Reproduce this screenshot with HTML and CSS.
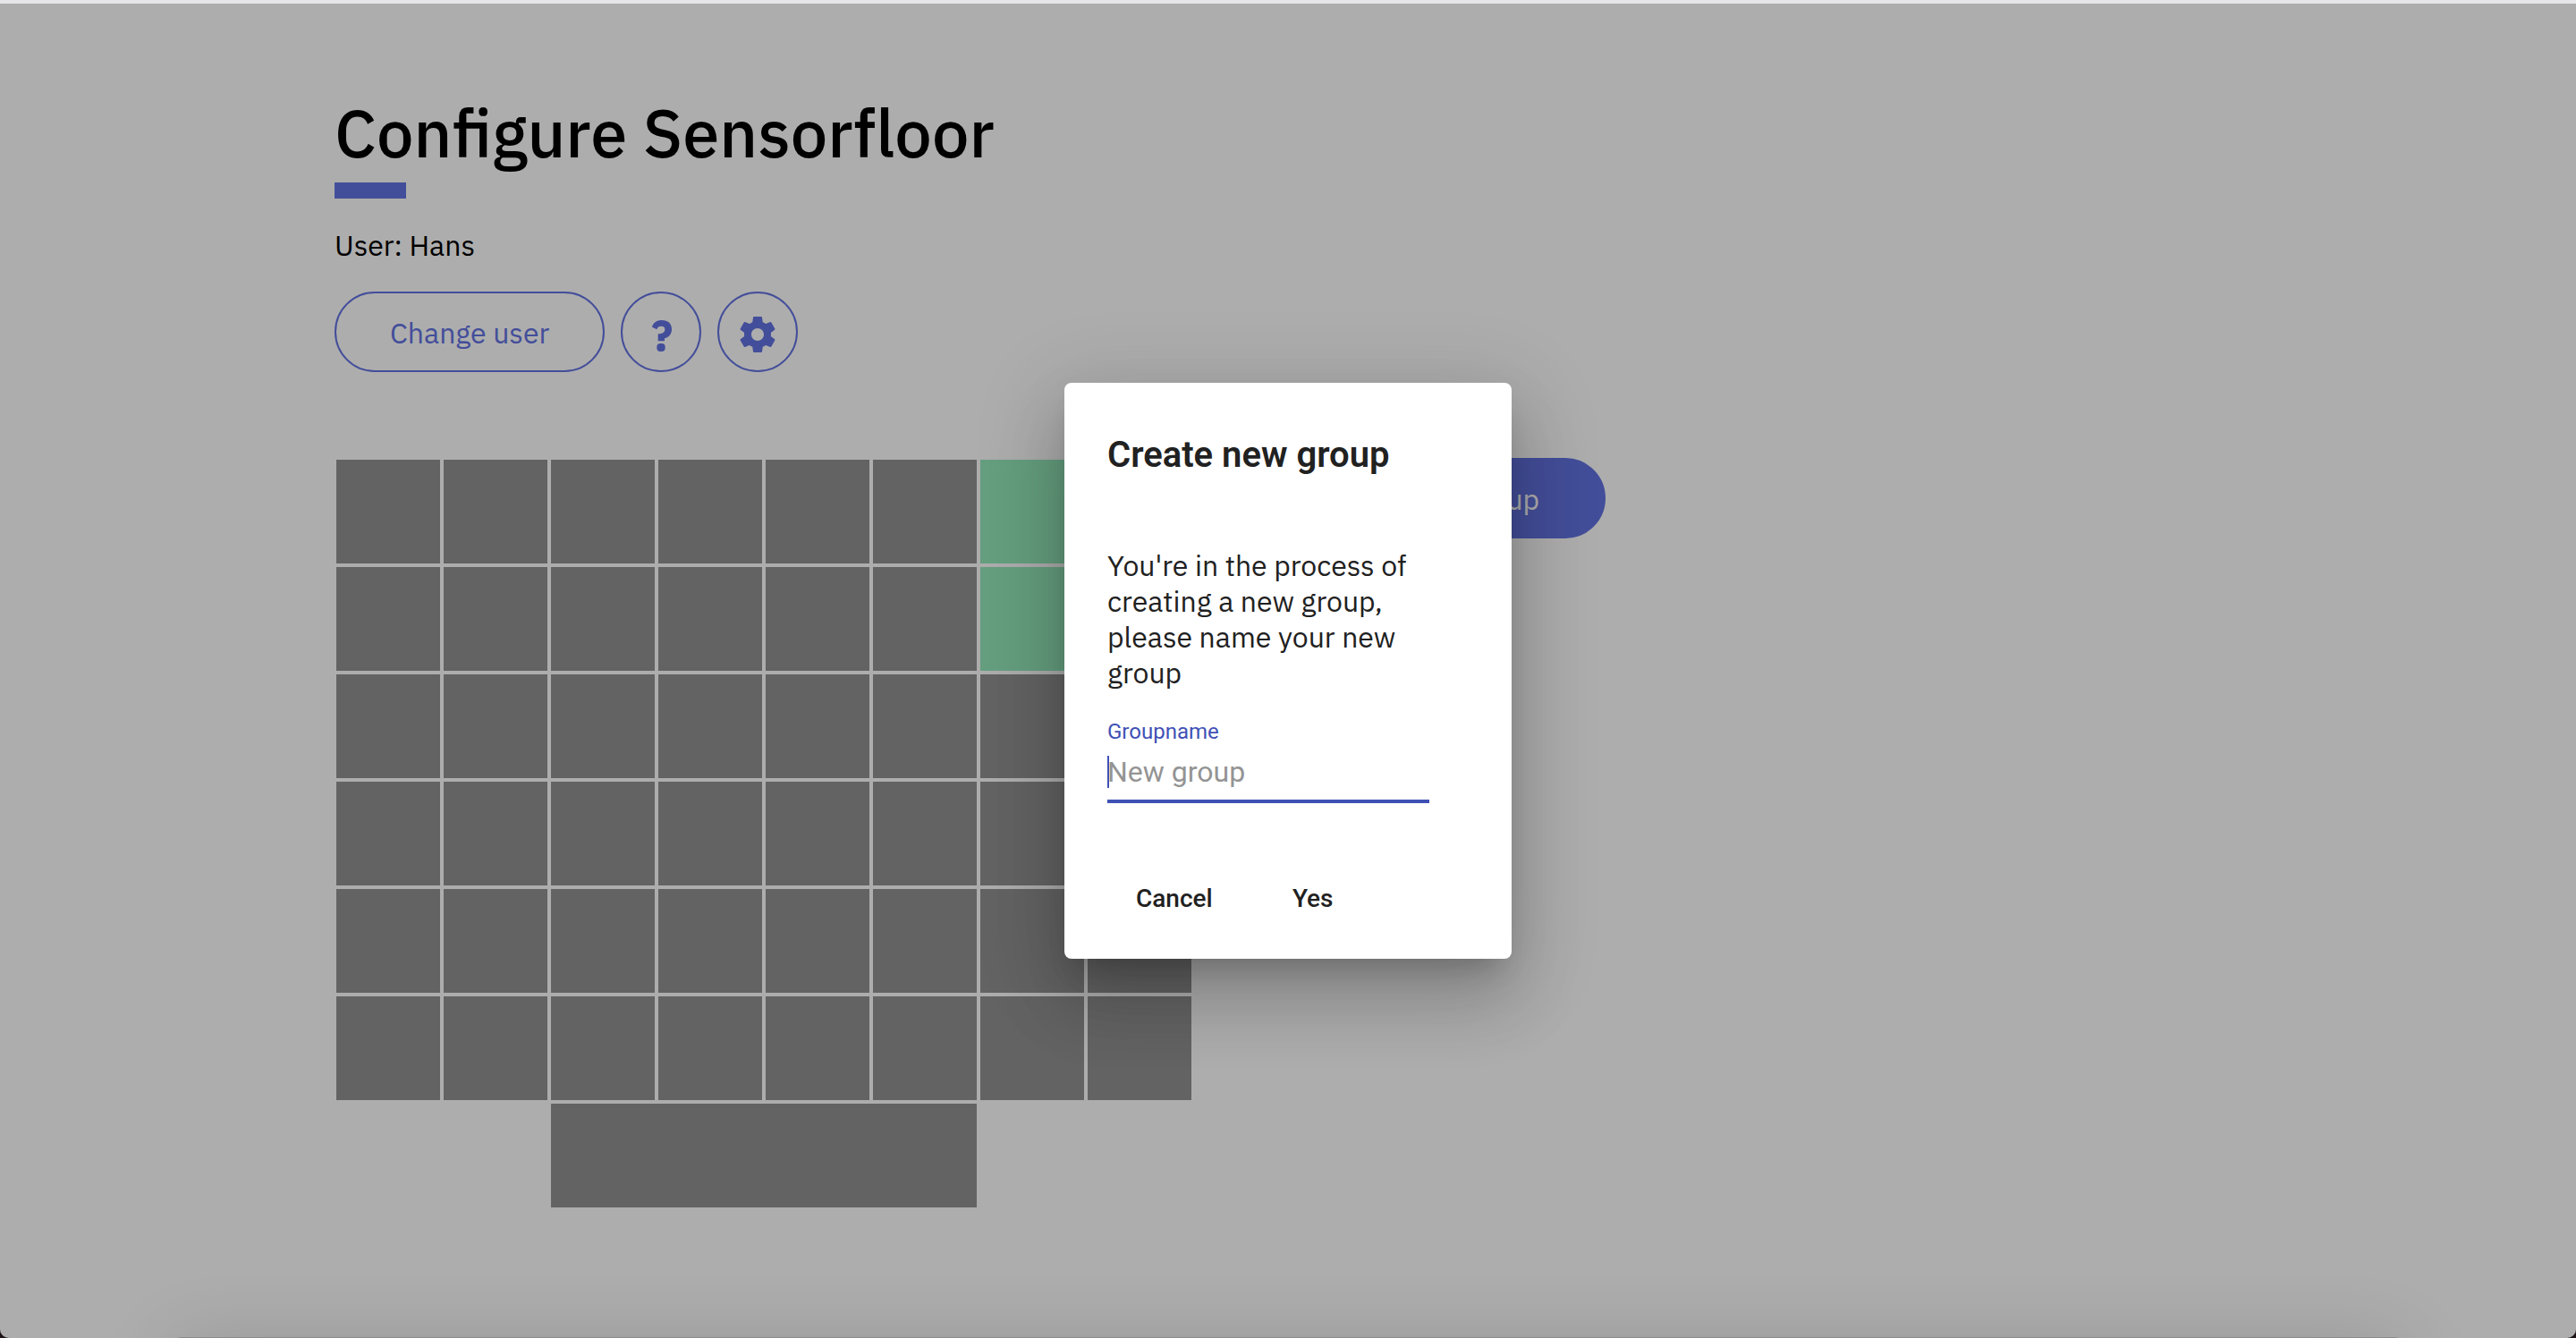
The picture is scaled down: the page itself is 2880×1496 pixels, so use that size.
FILE: index.html
```
<!DOCTYPE html>
<html lang="en">
<head>
  <meta charset="utf-8">
  <meta name="viewport" content="width=device-width, initial-scale=1">
  <title>Configure Sensorfloor</title>
  <link rel="stylesheet" href="styles.css">
</head>
<body>
  <div class="window">
    <main class="page">
      <h1 class="page-title">Configure Sensorfloor</h1>
      <div class="title-bar"></div>
      <p class="user">User: Hans</p>
      <div class="toolbar">
        <button class="btn" type="button">Change user</button>
        <button class="btn btn-icon" type="button" aria-label="Help">
          <svg class="icon" viewBox="103 119 144 144" aria-hidden="true"><path d="M145 166C149 151 161 143 178 143C198 143 211 154 211 173C211 190 202 200 187 204V213H165V189C180 189 188 184 188 174C188 167 184 163 176 163C168 163 163 166 161 174Z"/><rect x="161" y="221" width="28" height="27" rx="12"/></svg>
        </button>
        <button class="btn btn-icon" type="button" aria-label="Settings">
          <svg class="icon" viewBox="0 0 24 24" aria-hidden="true"><path d="M19.43 12.98c.04-.32.07-.64.07-.98s-.03-.66-.07-.98l2.11-1.65c.19-.15.24-.42.12-.64l-2-3.46c-.12-.22-.39-.3-.61-.22l-2.49 1c-.52-.4-1.08-.73-1.69-.98l-.38-2.65C14.46 2.18 14.25 2 14 2h-4c-.25 0-.46.18-.49.42l-.38 2.65c-.61.25-1.17.59-1.69.98l-2.49-1c-.23-.09-.49 0-.61.22l-2 3.46c-.13.22-.07.49.12.64l2.11 1.65c-.04.32-.07.65-.07.98s.03.66.07.98l-2.11 1.65c-.19.15-.24.42-.12.64l2 3.46c.12.22.39.3.61.22l2.49-1c.52.4 1.08.73 1.69.98l.38 2.65c.03.24.24.42.49.42h4c.25 0 .46-.18.49-.42l.38-2.65c.61-.25 1.17-.59 1.69-.98l2.49 1c.23.09.49 0 .61-.22l2-3.46c.12-.22.07-.49-.12-.64l-2.11-1.65zM12 15.5c-1.93 0-3.5-1.57-3.5-3.5s1.57-3.5 3.5-3.5 3.5 1.57 3.5 3.5-1.57 3.5-3.5 3.5z"/></svg>
        </button>
      </div>
      <div class="workspace">
        <div class="floor">
          <i class="tile"></i><i class="tile"></i><i class="tile"></i><i class="tile"></i><i class="tile"></i><i class="tile"></i><i class="tile selected"></i><i class="tile selected"></i>
          <i class="tile"></i><i class="tile"></i><i class="tile"></i><i class="tile"></i><i class="tile"></i><i class="tile"></i><i class="tile selected"></i><i class="tile selected"></i>
          <i class="tile"></i><i class="tile"></i><i class="tile"></i><i class="tile"></i><i class="tile"></i><i class="tile"></i><i class="tile"></i><i class="tile"></i>
          <i class="tile"></i><i class="tile"></i><i class="tile"></i><i class="tile"></i><i class="tile"></i><i class="tile"></i><i class="tile"></i><i class="tile"></i>
          <i class="tile"></i><i class="tile"></i><i class="tile"></i><i class="tile"></i><i class="tile"></i><i class="tile"></i><i class="tile"></i><i class="tile"></i>
          <i class="tile"></i><i class="tile"></i><i class="tile"></i><i class="tile"></i><i class="tile"></i><i class="tile"></i><i class="tile"></i><i class="tile"></i>
          <i class="tile entrance"></i>
        </div>
        <button class="btn btn-primary" type="button">Create new group</button>
      </div>
    </main>

    <div class="backdrop">
      <form class="dialog" role="dialog" aria-labelledby="dialog-title">
        <h2 class="dialog-title" id="dialog-title">Create new group</h2>
        <p class="dialog-text">You're in the process of creating a new group, please name your new group</p>
        <div class="field">
          <label class="field-label" for="groupname">Groupname</label>
          <input class="field-input" id="groupname" type="text" placeholder="New group">
        </div>
        <div class="dialog-actions">
          <button class="dialog-btn" type="button">Cancel</button>
          <button class="dialog-btn" type="button">Yes</button>
        </div>
      </form>
    </div>
    <div class="bottom-sheet"></div>
  </div>
</body>
</html>
```
FILE: styles.css
```
:root {
  --accent: #6473e4;
  --field: #3f51b5;
  --ink: #212121;
}

* {
  box-sizing: border-box;
}

html {
  background: #1d1416;
}

body {
  margin: 0;
  font: 400 32px/40px "IBM Plex Sans", Roboto, sans-serif;
  color: #000;
}

h1, h2, p {
  margin: 0;
}

button, input {
  font: inherit;
}

.window {
  position: relative;
  min-height: 100vh;
  overflow: hidden;
  background: #fff;
  border-top: 4px solid #e6e6ea;
  border-radius: 0 0 10px 10px;
}

.page {
  max-width: 2132px;
  margin: 0 auto;
  padding: 100px 0 96px;
}

.page-title {
  font-size: 74px;
  font-weight: 500;
  line-height: 88px;
}

.title-bar {
  width: 80px;
  height: 18px;
  margin-top: 12px;
  background: var(--accent);
}

.user {
  margin: 32px 0;
}

.toolbar {
  display: flex;
  gap: 18px;
}

.btn {
  display: flex;
  align-items: center;
  justify-content: center;
  height: 90px;
  padding: 2px 60px 0;
  border: 2px solid var(--accent);
  border-radius: 45px;
  background: transparent;
  color: var(--accent);
}

.btn-icon {
  width: 90px;
  padding: 6px 0 0;
}

.btn-primary {
  padding: 2px 72px 0;
  background: var(--accent);
  color: #fff;
}

.icon {
  width: 48px;
  height: 48px;
  fill: currentColor;
}

.workspace {
  display: flex;
  align-items: flex-start;
  gap: 60px;
  margin-top: 96px;
}

.floor {
  display: grid;
  grid-template-columns: repeat(8, 116px);
  grid-auto-rows: 116px;
  gap: 4px;
  padding: 2px;
}

.tile {
  background: #939393;
}

.tile.selected {
  background: #96ebbb;
}

.tile.entrance {
  grid-column: 3 / span 4;
}

.backdrop {
  position: absolute;
  inset: 0;
  display: flex;
  align-items: center;
  justify-content: center;
  background: rgba(0, 0, 0, 0.32);
}

.dialog {
  width: 500px;
  padding: 48px 48px 31px;
  border-radius: 8px;
  background: #fff;
  color: var(--ink);
  box-shadow:
    0 22px 30px -14px rgba(0, 0, 0, 0.2),
    0 48px 76px 6px rgba(0, 0, 0, 0.14),
    0 18px 92px 16px rgba(0, 0, 0, 0.12);
}

.dialog-title {
  font: 600 40px/66px Roboto, sans-serif;
}

.dialog-text {
  margin-top: 70px;
}

.field {
  width: 360px;
  margin-top: 32px;
  font-family: Roboto, sans-serif;
}

.field-label {
  display: block;
  font-size: 24px;
  line-height: 28px;
  color: var(--field);
}

/* The text cursor is painted as a background so it does not blink. */
.field-input {
  display: block;
  width: 100%;
  height: 53px;
  margin-top: 13px;
  padding: 0 0 13px;
  border: 0;
  border-bottom: 4px solid var(--field);
  outline: 0;
  background: linear-gradient(var(--field), var(--field)) 0 0 / 2px 36px no-repeat;
  caret-color: transparent;
  line-height: 36px;
}

.field-input::placeholder {
  color: #949494;
  opacity: 1;
}

.dialog-actions {
  display: flex;
  gap: 16px;
  margin-top: 71px;
}

.dialog-btn {
  min-width: 128px;
  height: 72px;
  padding: 0 32px;
  border: 0;
  background: transparent;
  color: var(--ink);
  font: 500 28px/72px Roboto, sans-serif;
}

/* Collapsed sheet: only its top edge and shadow reach into the window. */
.bottom-sheet {
  position: absolute;
  top: calc(100% - 1px);
  left: 200px;
  right: 200px;
  height: 400px;
  background: #8c8c8c;
  box-shadow: 0 18px 84px 4px rgba(0, 0, 0, 0.16);
}
```
